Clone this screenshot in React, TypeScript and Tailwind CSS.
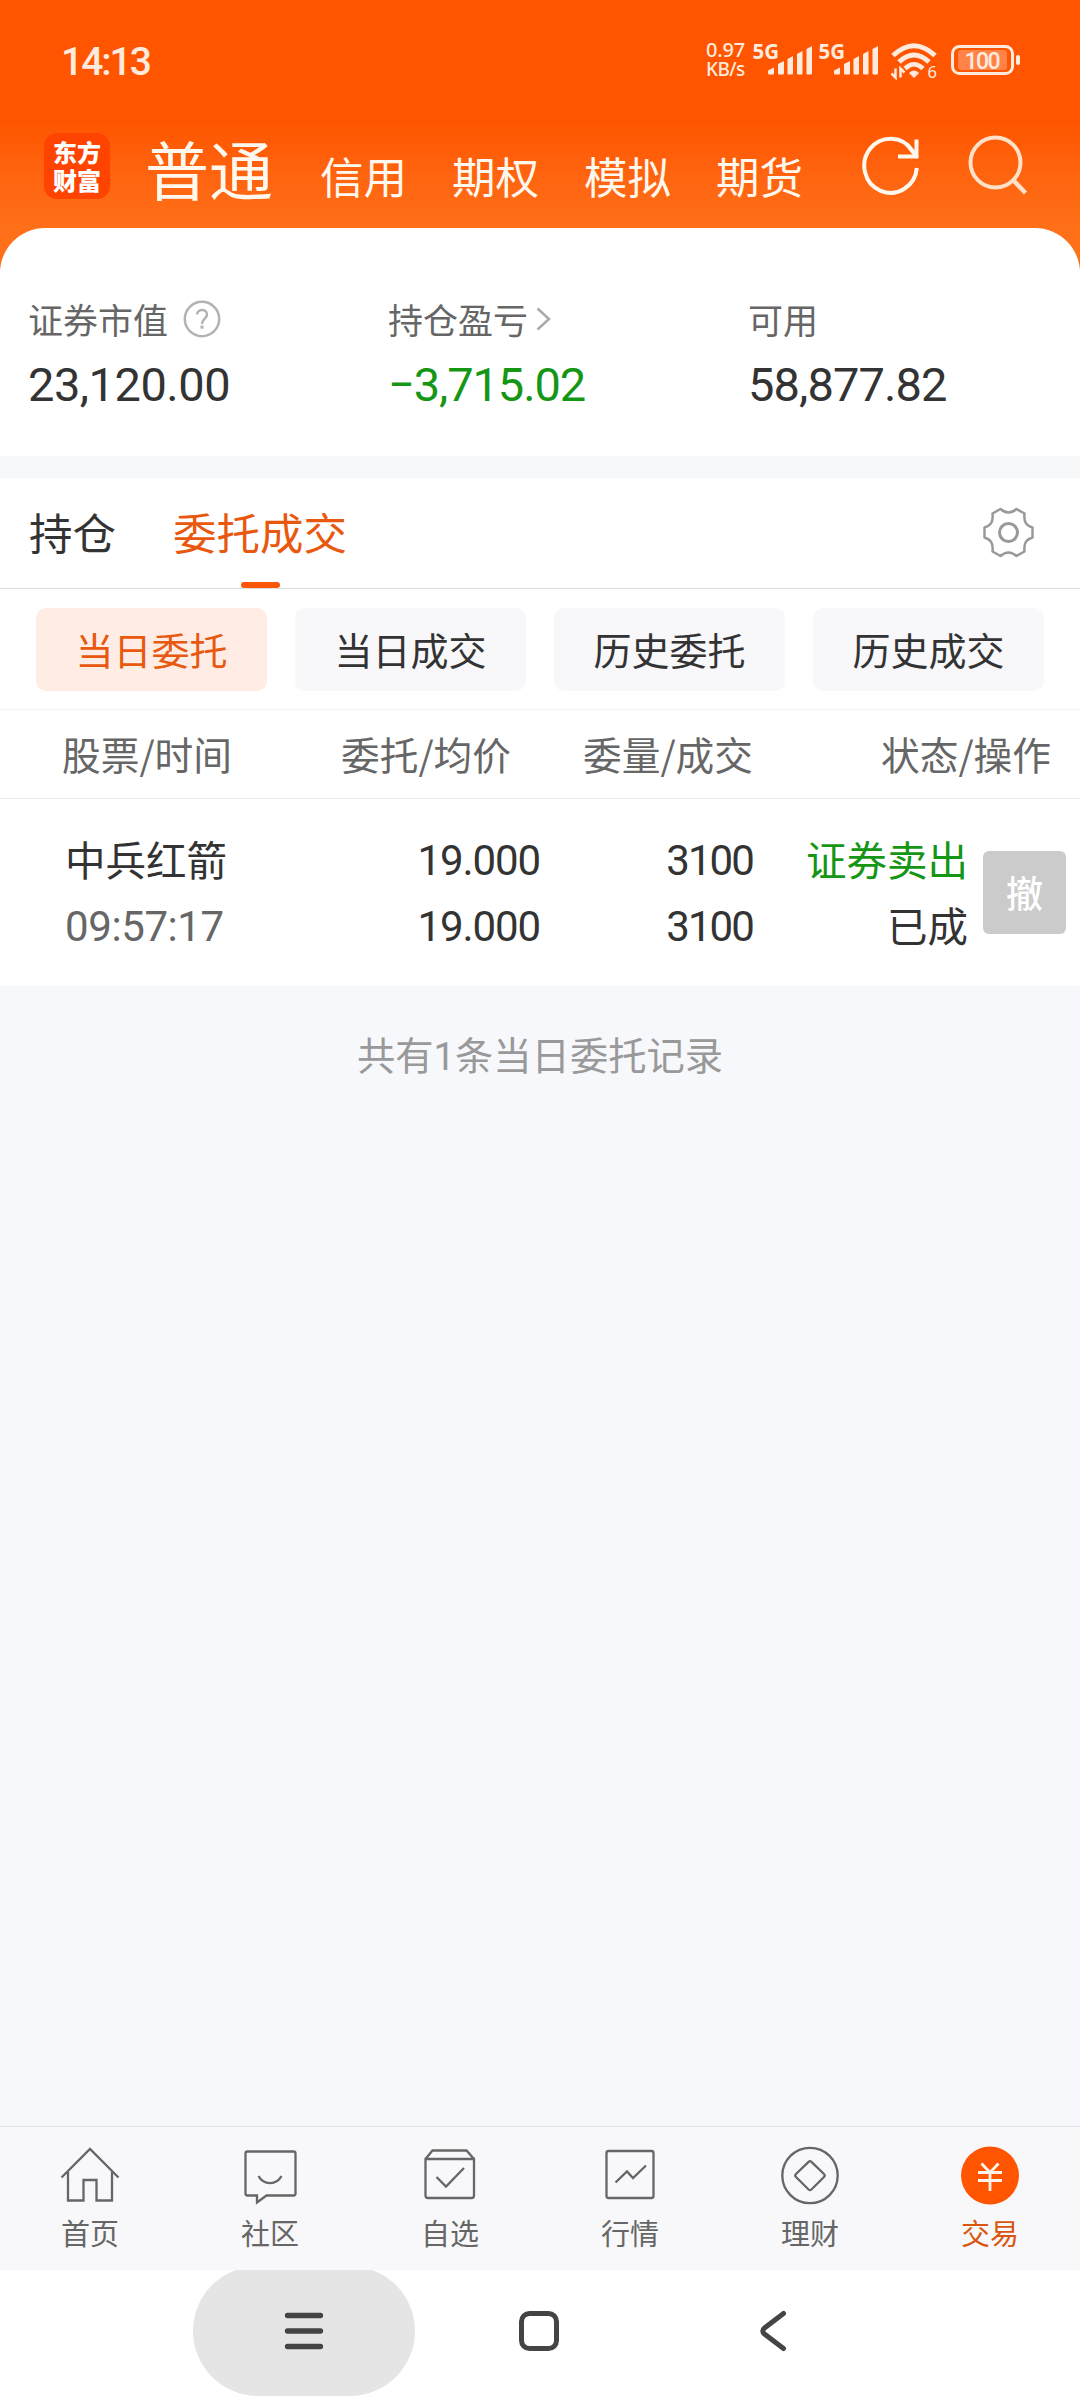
import React from "react";

const num = "font-['Roboto','Noto_Sans_CJK_SC',sans-serif]";

function Signal() {
  return (
    <div className="flex h-[34px] w-[66px] items-start">
      <svg className="overflow-visible" width="66" height="34" viewBox="0 0 66 34" fill="#FFEBDD">
        <text x="1.500" y="17" fontSize="20.5" fontWeight="700" fontFamily="Noto Sans" textLength="26.500" lengthAdjust="spacingAndGlyphs">5G</text>
        <path d="M17 31.500v-3l6-3v6q0 1-1 1h-4q-1 0-1-1zM27 22l6-3v12.500q0 1-1 1h-4q-1 0-1-1zM36.500 17l5.500-3v17.500q0 1-1 1h-3.500q-1 0-1-1zM46 12l5.500-3v22.500q0 1-1 1h-3.500q-1 0-1-1zM55.500 7l5.500-3v27.500q0 1-1 1h-3.500q-1 0-1-1z" />
      </svg>
    </div>
  );
}

function StatusBar() {
  return (
    <div className="flex h-[120px] items-start pt-[42px] pl-[61px] pr-[59px] text-[#FFEBDD]">
      <div className={`${num} mt-[2px] flex-1 text-[39px] leading-[36px] font-medium tracking-[-2px]`}>14:13</div>
      <div className="mt-[-2px] w-[45px] font-['Noto_Sans'] text-[20px] leading-[19px] font-medium tracking-[-0.2px]">
        0.97
        <br />
        <span className="text-[19px] tracking-[-0.6px]">KB/s</span>
      </div>
      <Signal />
      <Signal />
      <svg className="ml-[7px] overflow-visible" width="48" height="38" viewBox="0 0 48 38" fill="none" stroke="#FFEBDD">
        <path d="M3 13.500Q24-6 45 13.500" strokeWidth="5" />
        <path d="M9 20Q24 6 39 20" strokeWidth="5" />
        <path d="M15 26.500Q24 18 33 26.500" strokeWidth="4.500" />
        <path d="M19.500 31q4.500-4 9 0l-4.500 4.500z" fill="#FFEBDD" strokeWidth="1" />
        <path d="M5.500 26.500v9l-4-4M10.500 35.500v-9l4 4" strokeWidth="2.500" />
        <text x="37.500" y="36" fontSize="16.500" fontFamily="Noto Sans" fill="#FFEBDD" stroke="none">6</text>
      </svg>
      <svg className="ml-[12px]" width="71" height="36" viewBox="0 0 71 36">
        <rect x="2.500" y="4.500" width="60" height="27" rx="7" fill="none" stroke="#FFEBDD" strokeWidth="3" />
        <rect x="8" y="8" width="49" height="20" rx="3" fill="#FF8347" />
        <rect x="66" y="13" width="4" height="10" rx="2" fill="#FFEBDD" />
        <text x="14.500" y="26.500" fontSize="23" fontWeight="500" fontFamily="Roboto" fill="#FFEBDD" textLength="36" lengthAdjust="spacing">100</text>
      </svg>
    </div>
  );
}

function Header() {
  return (
    <div className="flex h-[153px] items-start bg-linear-to-b from-[#FF5500] from-[0px] to-[#FF7019] to-[108px] text-[#FFF8EE]">
      <div className="mt-[13px] ml-[44px] flex h-[66px] w-[66px] shrink-0 items-center justify-center rounded-[13px] bg-[#FF4300] text-[24px] leading-[28px] font-black text-white">
        <div className="w-[48px]">东方财富</div>
      </div>
      <div className="mt-[15px] ml-[35px] w-[132px] shrink-0 text-[64px] leading-[64px]">普通</div>
      <div className="mt-[34px] ml-[43px] flex shrink-0 gap-[44px] text-[43.500px] leading-[44px]">
        {["信用", "期权", "模拟", "期货"].map((t) => (
          <span key={t} className="w-[88px]">{t}</span>
        ))}
      </div>
      <svg className="mt-[13px] ml-[56px] shrink-0" width="64" height="66" viewBox="0 0 64 66" fill="none" stroke="#FFF8EE" strokeWidth="4">
        <path d="M56.800 35A26.300 27 0 1 1 52.600 18L56.500 24" />
        <path d="M56.500 6.500V23.500H38" />
        <path d="M47 11.500L57 24" />
      </svg>
      <svg className="ml-[42px] mt-[13px] shrink-0" width="64" height="66" viewBox="0 0 64 66" fill="none" stroke="#FFE0C8" strokeWidth="4">
        <circle cx="29.500" cy="29.500" r="25" />
        <path d="M47 47l12.500 13" strokeWidth="4.500" />
      </svg>
    </div>
  );
}

function Summary() {
  return (
    <div className="mt-[-45px] grid h-[228px] grid-cols-[360px_360px_360px] rounded-t-[45px] bg-white pl-[28px] pt-[72px] text-[#333]">
      <div>
        <div className="flex h-[38px] items-center text-[35px] leading-[38px] text-[#666]">
          证券市值
          <svg className="ml-[14px]" width="40" height="40" viewBox="0 0 40 40" fill="none" stroke="#b3b3b3" strokeWidth="2.500">
            <circle cx="20" cy="20" r="17.200" />
            <path d="M15 15.500c.5-6 10-6 10 0 0 4-5 4.500-5 9.500" />
            <path d="M20 26.500v3.200" strokeWidth="3" />
          </svg>
        </div>
        <div className={`${num} mt-[19px] text-[47px] leading-[56px] tracking-[-0.5px]`}>23,120.00</div>
      </div>
      <div>
        <div className="flex h-[38px] items-center text-[35px] leading-[38px] text-[#666]">
          持仓盈亏
          <svg className="ml-[8px]" width="16" height="26" viewBox="0 0 16 26" fill="none" stroke="#aaa" strokeWidth="2.500">
            <path d="M1.500 2.500L13 13 1.500 23.500" />
          </svg>
        </div>
        <div className={`${num} mt-[19px] text-[47px] leading-[56px] tracking-[-1.1px] text-[#159615]`}>−3,715.02</div>
      </div>
      <div>
        <div className="h-[38px] text-[35px] leading-[38px] text-[#666]">可用</div>
        <div className={`${num} mt-[19px] text-[47px] leading-[56px] tracking-[-0.9px]`}>58,877.82</div>
      </div>
    </div>
  );
}

function Tabs() {
  return (
    <div className="flex h-[111px] items-stretch border-b border-[#dedede] bg-white pr-[45px] pl-[29px] text-[43.500px] leading-[107px] text-[#333]">
      <div className="w-[144px]">持仓</div>
      <div className="flex flex-col items-center text-[#E8580F]">
        <div className="h-[104px]">委托成交</div>
        <div className="h-[6px] w-[39px] rounded-[3px] bg-[#F9560A]" />
      </div>
      <div className="flex-1" />
      <svg className="mt-[28px]" width="53" height="53" viewBox="-26.500 -26.500 53 53" fill="none" stroke="#999" strokeWidth="2.500" strokeLinejoin="round">
        <circle r="9" strokeWidth="3" />
        <path d="M-8-23.500Q0-16.500 8-23.500L16-19C15-10 18-7 24-5V5C18 7 15 10 16 19L8 23.500Q0 16.500-8 23.500L-16 19C-15 10-18 7-24 5V-5C-18-7-15-10-16-19Z" />
      </svg>
    </div>
  );
}

function Chips() {
  return (
    <div className="flex h-[121px] gap-[28px] border-b border-[#f5f5f5] bg-white pt-[19px] pl-[36px] text-[38px] leading-[82px] text-[#333]">
      {["当日委托", "当日成交", "历史委托", "历史成交"].map((t, i) => (
        <div key={t} className={`h-[83px] w-[231px] rounded-[10px] text-center ${i === 0 ? "bg-[#FFEDE5] text-[#E8580F]" : "bg-[#F8F8FB]"}`}>
          {t}
        </div>
      ))}
    </div>
  );
}

function Orders() {
  return (
    <>
      <div className="grid h-[89px] grid-cols-[232px_279px_242px_298px] border-b border-[#ededed] bg-white text-right text-[38.700px] leading-[86px] text-[#666]">
        <div>股票/时间</div>
        <div>委托/均价</div>
        <div>委量/成交</div>
        <div>状态/操作</div>
      </div>
      <div className="flex h-[187px] bg-white pt-[29px] text-[40.500px] leading-[66px] text-[#333]">
        <div className="w-[265px] pl-[65px]">
          <div className="mt-[-2px] mb-[2px]">中兵红箭</div>
          <div className={`${num} text-[42px] tracking-[-0.4px] text-[#666]`}>09:57:17</div>
        </div>
        <div className={`${num} w-[275px] text-right text-[42px] tracking-[-1.1px]`}>
          <div>19.000</div>
          <div>19.000</div>
        </div>
        <div className={`${num} w-[213px] text-right text-[42px] tracking-[-1.9px]`}>
          <div>3100</div>
          <div>3100</div>
        </div>
        <div className="mt-[-2px] w-[215px] text-right">
          <div className="text-[#159615]">证券卖出</div>
          <div>已成</div>
        </div>
        <div className="mt-[23px] ml-[15px] h-[83px] w-[83px] rounded-[6px] bg-[#CBCBCB] text-center text-[37px] leading-[82px] font-medium text-white">撤</div>
      </div>
    </>
  );
}

const tabs: { label: string; icon: React.ReactNode }[] = [
  { label: "首页", icon: <path d="M1.500 31.500L30 3l28.500 28.500M8 26v28.500h15.500V34h13v20.500H52V26" /> },
  { label: "社区", icon: <><path d="M7.500 5.500h46q2 0 2 2v40q0 2-2 2H26.500l-9.500 7v-7H7.500q-2 0-2-2v-40q0-2 2-2z" /><path d="M18.500 30c5 9.500 18 9.500 23 0" /></> },
  { label: "自选", icon: <><path d="M5.500 13v36.500q0 2.500 2.500 2.500h43.500q2.500 0 2.500-2.500V13zL12.500 4.500h34l7.500 8.500" /><path d="M16.500 31l9.500 9.500L44 22" /></> },
  { label: "行情", icon: <><rect x="6.500" y="5" width="47" height="47" rx="2" /><path d="M15.500 36.500L27 25.500l6 6.500L46 19.500" /></> },
  { label: "理财", icon: <><circle cx="30" cy="29.500" r="27.700" /><path d="M28.600 15.800Q30 14.500 31.400 15.800L44 28Q45.500 29.500 44 31L31.400 43.500Q30 44.800 28.600 43.500L16 31Q14.500 29.500 16 28Z" /></> },
  { label: "交易", icon: <><circle cx="30" cy="29.500" r="29" fill="#FF5500" stroke="none" /><path stroke="#FFF3EA" strokeWidth="2.800" d="M21.500 17.500l8.500 9 8.500-9M18 26.500h24M18 34.500h24M30 26v19" /></> },
];

export default function App() {
  return (
    <div className="flex h-[2400px] w-[1080px] flex-col overflow-hidden bg-white font-['Noto_Sans_CJK_SC',sans-serif]">
      <div className="bg-[#FF5500]">
        <StatusBar />
        <Header />
      </div>
      <Summary />
      <div className="h-[22px] bg-[#F7F8FA]" />
      <Tabs />
      <Chips />
      <Orders />
      <div className={`${num} flex-1 bg-[#F7F8FB] pt-[41px] text-center text-[38.300px] leading-[60px] text-[#999]`}>共有1条当日委托记录</div>
      <div className="grid h-[144px] grid-cols-6 border-t border-[#dfe1e3] bg-[#F8F8FB] pt-[19px] text-[29px] leading-[36px] text-[#666]">
        {tabs.map((t, i) => (
          <div key={t.label} className={`flex flex-col items-center ${i === 5 ? "text-[#D9560F]" : ""}`}>
            <svg className="mr-px" width="60" height="60" viewBox="0 0 60 60" fill="none" stroke="#666" strokeWidth="2.300">{t.icon}</svg>
            <div className="mt-[8px]">{t.label}</div>
          </div>
        ))}
      </div>
      <div className="flex h-[130px] items-start overflow-hidden bg-white">
        <div className="mt-[-4px] ml-[193px] flex h-[130px] w-[222px] items-center justify-center rounded-full bg-[#E5E5E5]">
          <svg width="40" height="40" viewBox="0 0 40 40" stroke="#444" strokeWidth="5.300" strokeLinecap="round">
            <path d="M3.500 4.500h33M3.500 20h33M3.500 35.500h33" />
          </svg>
        </div>
        <svg className="mt-[39px] ml-[102px]" width="44" height="44" viewBox="0 0 44 44" fill="none" stroke="#444" strokeWidth="5">
          <rect x="4.500" y="4.500" width="35" height="35" rx="8" />
        </svg>
        <svg className="mt-[38px] ml-[197px]" width="32" height="46" viewBox="0 0 32 46" fill="none" stroke="#444" strokeWidth="5" strokeLinecap="round">
          <path d="M25.500 5.500L6.500 20q-3.500 3 0 6L25.500 40.500" />
        </svg>
      </div>
    </div>
  );
}
